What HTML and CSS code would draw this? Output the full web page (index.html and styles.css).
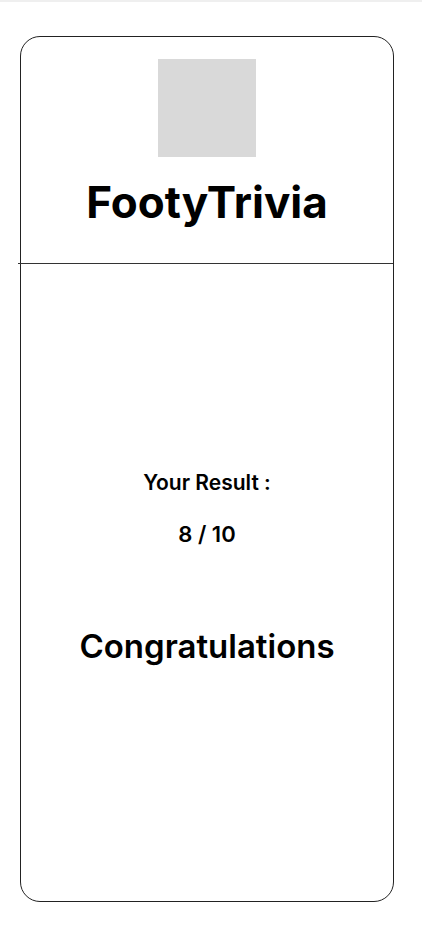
FILE: index.html
```html
<!DOCTYPE html>
<html lang="en">
<head>
<meta charset="utf-8">
<title>FootyTrivia</title>
<link rel="stylesheet" href="styles.css">
</head>
<body>
<div class="topbar"></div>
<main class="card">
  <header class="head">
    <div class="logo"></div>
    <h1 class="title">FootyTrivia</h1>
  </header>
  <div class="divider"></div>
  <section class="result">
    <p class="label">Your Result :</p>
    <p class="score">8 / 10</p>
    <p class="congrats">Congratulations</p>
  </section>
</main>
</body>
</html>
```
FILE: styles.css
```css
html, body {
  margin: 0;
  padding: 0;
  background: #ffffff;
}
body {
  font-family: Inter, "Noto Sans", sans-serif;
  color: #000;
  width: 422px;
  height: 934px;
  overflow: hidden;
}
.topbar {
  height: 2px;
  background: #efefef;
}
.card {
  box-sizing: border-box;
  margin: 34px 0 0 20px;
  width: 374px;
  height: 866px;
  border: 1.3px solid #222;
  border-radius: 20px;
  display: flex;
  flex-direction: column;
}
.head {
  height: 226px;
  display: flex;
  flex-direction: column;
  align-items: center;
  padding-top: 22px;
  box-sizing: border-box;
}
.logo {
  width: 98px;
  height: 98px;
  background: #d9d9d9;
  flex: none;
}
.title {
  margin: 20px 0 0;
  font-size: 44px;
  font-weight: 700;
  line-height: 50px;
}
.divider {
  height: 1px;
  background: #333;
  margin-left: -3px;
  width: 375px;
}
.result {
  display: flex;
  flex-direction: column;
  align-items: center;
  padding-top: 207px;
}
.label {
  margin: 0;
  font-size: 21px;
  font-weight: 600;
  line-height: 24px;
}
.score {
  margin: 27px 0 0;
  font-size: 22px;
  font-weight: 600;
  line-height: 24px;
}
.congrats {
  margin: 82px 0 0;
  font-size: 33px;
  font-weight: 600;
  line-height: 36px;
}
```
